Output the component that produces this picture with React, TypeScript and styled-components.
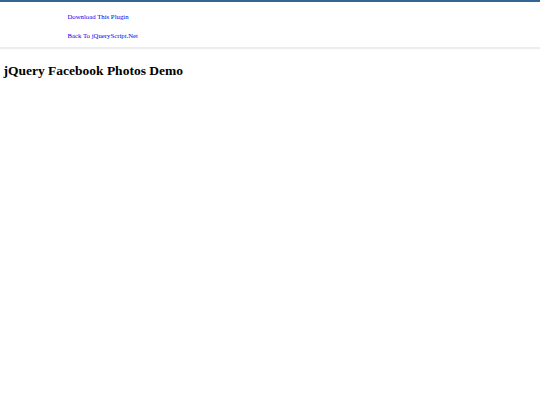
import React from "react";
import styled, { createGlobalStyle } from "styled-components";

const Global = createGlobalStyle`
  html, body { margin: 0; padding: 0; background: #fff; }
  body { font-family: "Liberation Serif", "Times New Roman", serif; color: #000; }
`;

const Menu = styled.header`
  border-top: 2.1px solid #316594;
  background: #fff;
  height: 45px;
  box-shadow: 0 2px 1px 0 rgba(0, 0, 0, 0.07);
`;

const Center = styled.div`
  width: 405px;
  margin: 0 auto;
  padding-top: 5px;
`;

const LinkList = styled.ul`
  list-style: none;
  margin: 0;
  padding: 0;
  width: 90px;
  line-height: 19px;
  font-size: 6.75px;
`;

const Item = styled.li`
  margin: 0;
`;

const Link = styled.a`
  color: #0000ee;
  text-decoration: none;
`;

const Main = styled.main`
  padding: 0 3.4px;
`;

const Title = styled.h1`
  font-size: 13.5px;
  font-weight: bold;
  margin: 16px 0 9px;
`;

export default function App() {
  return (
    <>
      <Global />
      <Menu>
        <Center>
          <LinkList>
            <Item>
              <Link href="#">Download This Plugin</Link>
            </Item>
            <Item>
              <Link href="#">Back To jQueryScript.Net</Link>
            </Item>
          </LinkList>
        </Center>
      </Menu>
      <Main>
        <Title>jQuery Facebook Photos Demo</Title>
      </Main>
    </>
  );
}
